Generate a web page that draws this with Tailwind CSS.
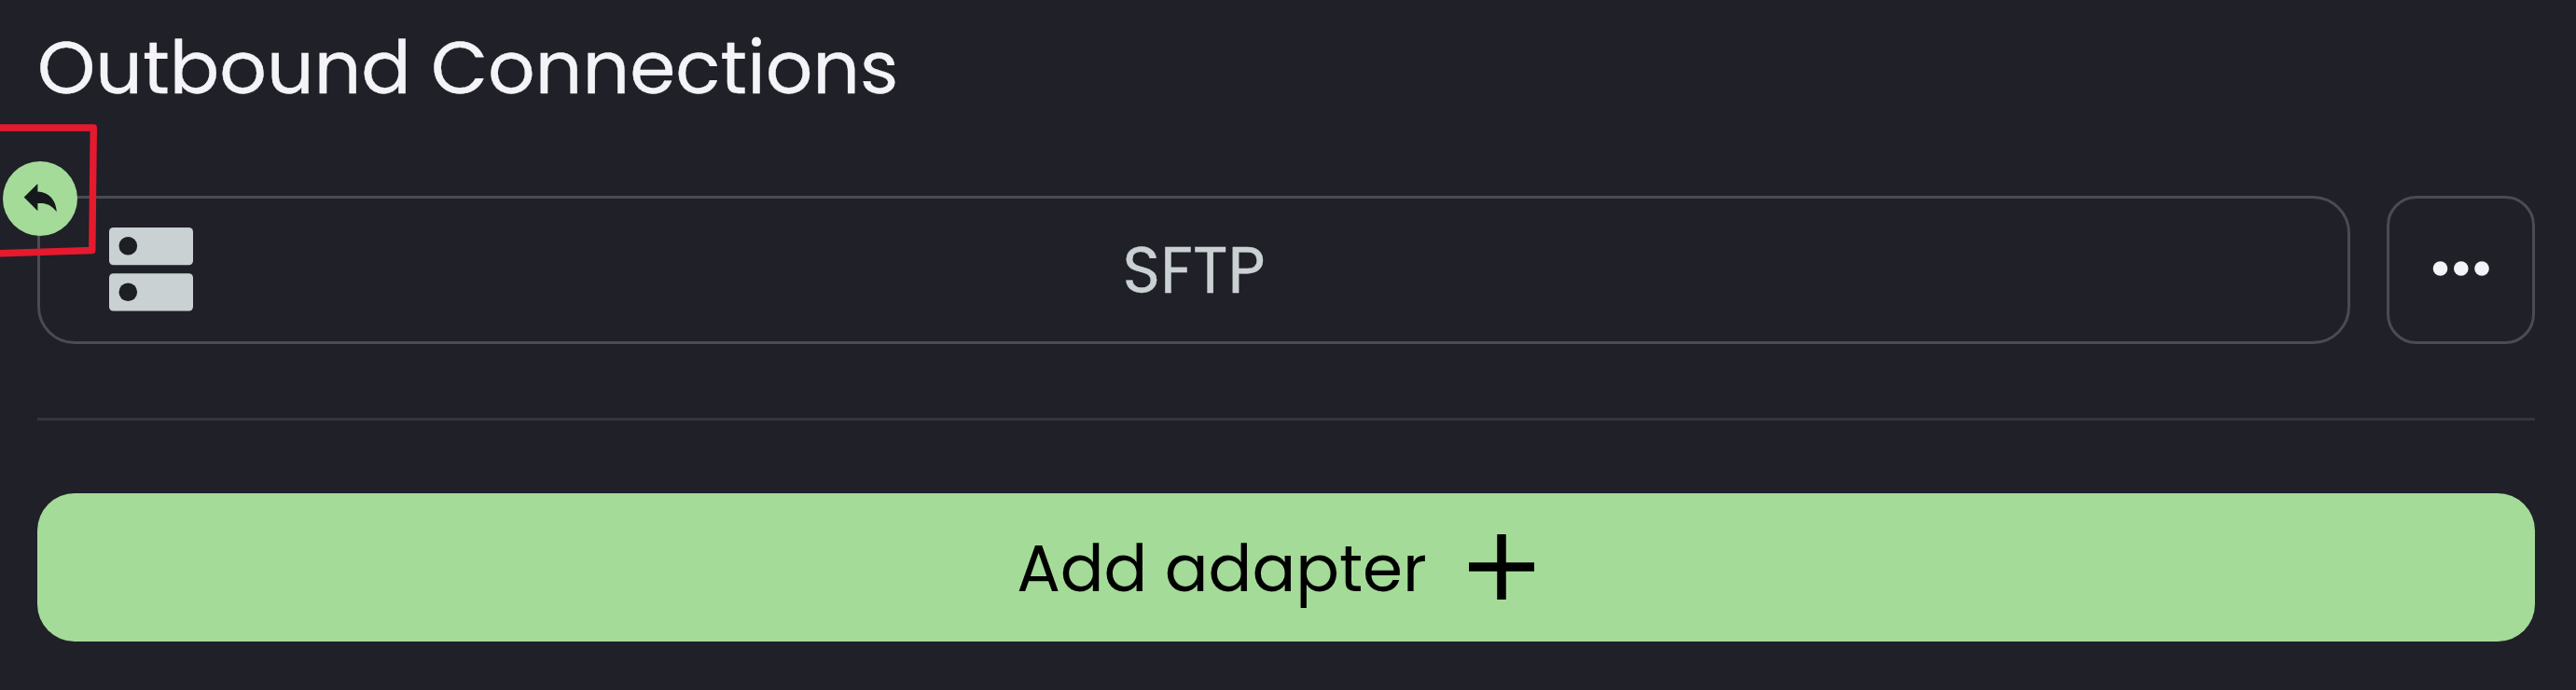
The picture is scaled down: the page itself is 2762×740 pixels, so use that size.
<!DOCTYPE html>
<html lang="en">
<head>
<meta charset="utf-8">
<title>Outbound Connections</title>
<script src="https://cdn.jsdelivr.net/npm/@tailwindcss/browser@4"></script>
</head>
<body class="bg-[#202028] font-['Poppins','Inter',sans-serif]">
<main class="relative flex h-[740px] w-[2762px] flex-col overflow-hidden pr-[44px] pl-[40px] pt-[13px]">
  <h1 class="flex h-[120px] items-center whitespace-nowrap text-[79.2px] leading-none text-[#f4f4f8] [-webkit-text-stroke:0.3px_#f4f4f8]"><span>Outbound Connections</span></h1>
  <section class="mt-[77px] flex h-[159px] shrink-0 gap-[39px]">
    <div class="relative flex w-[2480px] items-center justify-center rounded-[40px] border-[3px] border-[#4b4c50]">
      <svg class="absolute left-[74px] top-[31px] h-[90px] w-[90px]" viewBox="0 0 90 90">
        <rect width="90" height="40.3" rx="4.5" fill="#c9d1d3"/>
        <rect y="49.2" width="90" height="40.3" rx="4.5" fill="#c9d1d3"/>
        <circle cx="20.3" cy="19.8" r="9.8" fill="#1c2024"/>
        <circle cx="20.3" cy="69.3" r="9.8" fill="#1c2024"/>
      </svg>
      <span class="pt-px text-[69.2px] leading-none text-[#c9d1d3] [-webkit-text-stroke:0.3px_#c9d1d3]">SFTP</span>
    </div>
    <button class="flex w-[159px] items-center justify-center rounded-[32px] border-[3px] border-[#4b4c50] pb-[4px]" aria-label="More">
      <svg class="h-[16px] w-[62px]" viewBox="0 0 62 16" fill="#f4f4f8">
        <circle cx="8.5" cy="8" r="7.8"/>
        <circle cx="30.8" cy="8" r="7.8"/>
        <circle cx="53" cy="8" r="7.8"/>
      </svg>
    </button>
  </section>
  <hr class="mt-[79px] h-[3px] shrink-0 border-0 bg-[#35363a]">
  <button class="mt-[78px] flex h-[159px] shrink-0 items-center justify-center gap-[45px] rounded-[40px] bg-[#a4db98] pr-[23px] text-[69.2px] leading-none text-black">
    <span class="pt-[2px]">Add adapter</span>
    <svg class="mb-[2px] h-[70px] w-[70px]" viewBox="0 0 70 70" fill="none" stroke="currentColor" stroke-width="9.5"><path d="M35 0V70M0 35H70"/></svg>
  </button>
  <svg class="absolute left-0 top-[120px] h-[160px] w-[120px]" viewBox="0 120 120 160">
    <circle cx="43" cy="213" r="40" fill="#a4db98"/>
    <path d="M25.7 211.5L40.4 197V205.5C52 206 60 214 60.8 227.3C55 219.5 49 217.3 40.4 218V226.3Z" fill="#16191c"/>
    <path d="M0 137H100.3L98.8 268.5L0 271.7" fill="none" stroke="#e51a2e" stroke-width="7.4" stroke-linejoin="round"/>
  </svg>
</main>
</body>
</html>
